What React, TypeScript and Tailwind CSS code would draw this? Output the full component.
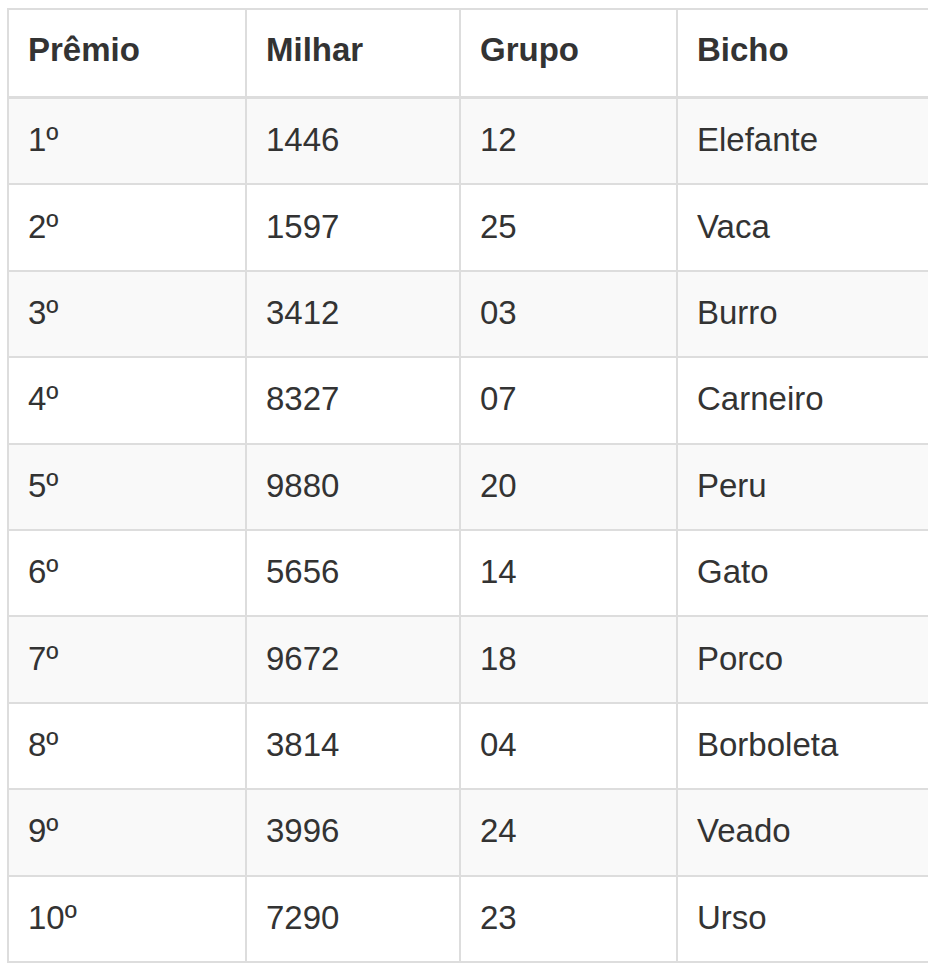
import React from "react";

const rows: [string, string, string, string][] = [
  ["1º", "1446", "12", "Elefante"],
  ["2º", "1597", "25", "Vaca"],
  ["3º", "3412", "03", "Burro"],
  ["4º", "8327", "07", "Carneiro"],
  ["5º", "9880", "20", "Peru"],
  ["6º", "5656", "14", "Gato"],
  ["7º", "9672", "18", "Porco"],
  ["8º", "3814", "04", "Borboleta"],
  ["9º", "3996", "24", "Veado"],
  ["10º", "7290", "23", "Urso"],
];

function Row({
  cells,
  head,
  striped,
}: {
  cells: string[];
  head?: boolean;
  striped?: boolean;
}) {
  const base = "flex px-[19px] leading-[47px] border-r-2 border-[#ddd]";
  const align = head ? "items-end pb-[23px]" : "items-center pb-[3px]";
  return (
    <div
      className={`flex ${head ? "h-[89px] border-b-[3px]" : "h-[86.4px] border-b-2"} border-[#ddd] ${
        striped ? "bg-[#f9f9f9]" : "bg-white"
      } ${head ? "font-bold" : ""}`}
    >
      <div className={`${base} ${align} w-[238px] shrink-0`}>{cells[0]}</div>
      <div className={`${base} ${align} w-[214px] shrink-0`}>{cells[1]}</div>
      <div className={`${base} ${align} w-[217px] shrink-0`}>{cells[2]}</div>
      <div className={`${base} ${align} flex-1`}>{cells[3]}</div>
    </div>
  );
}

export default function App() {
  return (
    <div className="w-[928px] h-[971px] overflow-hidden bg-white pt-[8px] pl-[7px]">
      <div
        className="w-[1000px] border-t-2 border-l-2 border-[#ddd] text-[33px] text-[#333]"
        style={{ fontFamily: '"Liberation Sans", Arial, sans-serif' }}
      >
        <Row cells={["Prêmio", "Milhar", "Grupo", "Bicho"]} head />
        {rows.map((r, i) => (
          <Row key={i} cells={r} striped={i % 2 === 0} />
        ))}
      </div>
    </div>
  );
}
